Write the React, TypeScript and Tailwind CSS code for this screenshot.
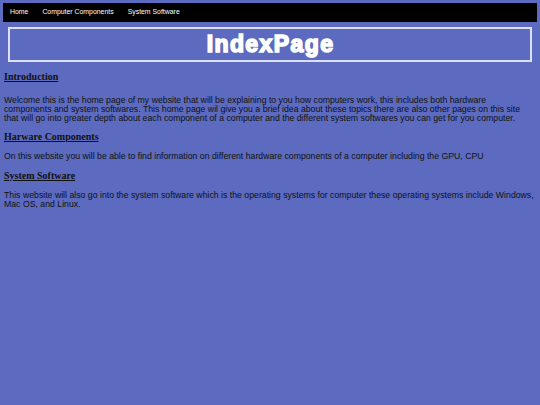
export default function App() {
  const nav = ["Home", "Computer Components", "System Software"];
  const serif = { fontFamily: '"Liberation Serif", "Times New Roman", serif' };

  return (
    <div className="min-h-[405px] bg-[#5c6bc0] p-[3px] text-[#111]" style={{ fontFamily: '"Liberation Sans", Arial, sans-serif' }}>
      {/* Navigation */}
      <nav className="flex h-[19px] items-center gap-[14px] bg-black px-[7px]">
        {nav.map((item) => (
          <a key={item} className="text-[6.9px] text-white">
            {item}
          </a>
        ))}
      </nav>

      {/* Header */}
      <header className="mx-[5px] mt-[5px] flex h-[35px] items-center justify-center border-2 border-[#dcdff5]">
        <h1 className="pl-[1px] text-[23px] font-bold leading-none tracking-[1.4px] text-white [-webkit-text-stroke:1.6px_white]">
          IndexPage
        </h1>
      </header>

      <main className="px-[1px] text-[8.72px] leading-[9px]">
        <h2 className="mt-[9px] text-[10px] font-bold leading-[12px] underline" style={serif}>
          Introduction
        </h2>
        <p className="mt-[13px]">
          Welcome this is the home page of my website that will be explaining to you how computers work, this includes both hardware
          <br />
          components and system softwares. This home page wil give you a brief idea about these topics there are also other pages on this site
          <br />
          that will go into greater depth about each component of a computer and the different system softwares you can get for you computer.
        </p>

        <h2 className="mt-[8px] text-[10px] font-bold leading-[12px] underline" style={serif}>
          Harware Components
        </h2>
        <p className="mt-[8.5px]">
          On this website you will be able to find information on different hardware components of a computer including the GPU, CPU
        </p>

        <h2 className="mt-[9.5px] text-[10px] font-bold leading-[12px] underline" style={serif}>
          System Software
        </h2>
        <p className="mt-[8.5px]">
          This website will also go into the system software which is the operating systems for computer these operating systems include Windows, Mac OS, and Linux.
        </p>
      </main>
    </div>
  );
}
